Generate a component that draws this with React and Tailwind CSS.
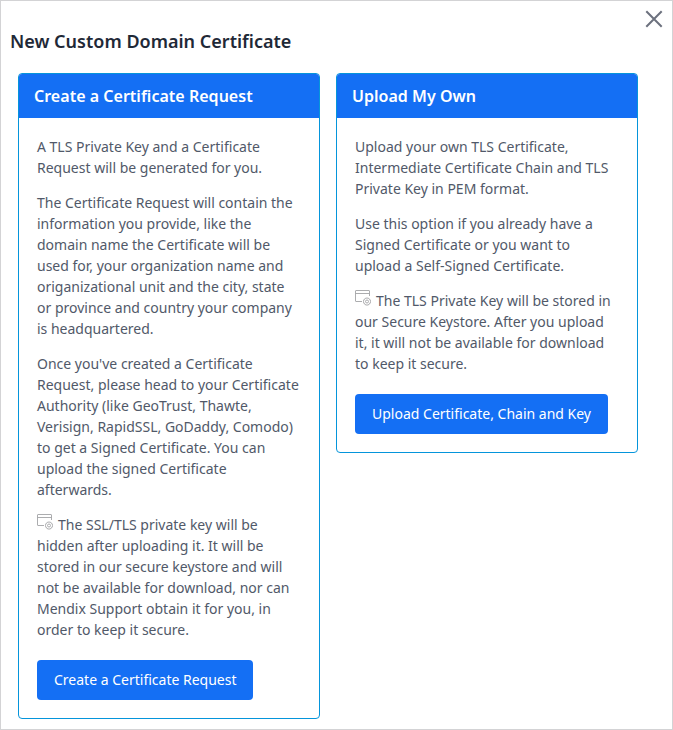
import React from "react";

function KeystoreIcon() {
  return (
    <svg
      className="mr-[5px] inline-block h-4 w-4 align-baseline"
      viewBox="0 0 16 16"
      fill="none"
      stroke="#a3a4a6"
      strokeWidth="0.9"
    >
      <path d="M7 11.5H1a.5.5 0 0 1-.5-.5V1a.5.5 0 0 1 .5-.5h13a.5.5 0 0 1 .5.5v5M.5 3.5h14" />
      <path d="M10.6 8.1h2.8l.7 1 1.1.6.3 1.8-.3 1.8-1.1.6-.7 1.1h-2.8l-.7-1.1-1.1-.6-.3-1.8.3-1.8 1.1-.6z" />
      <circle cx="12" cy="11.5" r="1.5" />
    </svg>
  );
}

function Card({ title, action, buttonWidth, children }) {
  return (
    <section className="w-[302px] overflow-hidden rounded-[4px] border border-[#0595db] bg-white">
      <h2 className="flex h-11 items-center bg-[#146ff4] px-[15px] text-base font-semibold tracking-[0.02px] text-white">
        {title}
      </h2>
      <div className="p-[18px]">
        <div className="flex flex-col gap-[14px] text-sm leading-[21px] text-[#515969]">
          {children}
        </div>
        <button
          className={`mt-5 h-10 rounded-[4px] bg-[#146ff4] pl-[17px] text-left text-sm whitespace-nowrap text-white ${buttonWidth}`}
        >
          {action}
        </button>
      </div>
    </section>
  );
}

export default function App() {
  return (
    <div className="flex h-[730px] w-[673px] flex-col border border-[#d3d3d5] bg-white font-['Noto_Sans',sans-serif]">
      <header className="flex h-[72px] justify-between pt-[9px] pr-[9px] pl-[9px]">
        <h1 className="pt-[18px] text-lg leading-[27px] font-semibold tracking-[0.01px] text-[#1f2937]">
          New Custom Domain Certificate
        </h1>
        <button aria-label="Close" className="h-[18px] w-[18px]">
          <svg className="h-[18px] w-[18px]" viewBox="0 0 18 18" stroke="#6c717e" strokeWidth="2" fill="none">
            <path d="M1.3 2.3l15.4 15.4M16.7 2.3L1.3 17.7" transform="translate(0 -1)" />
          </svg>
        </button>
      </header>
      <main className="flex items-start gap-4 pl-[17px]">
        <Card
          title="Create a Certificate Request"
          action="Create a Certificate Request"
          buttonWidth="w-[216px]"
        >
          <p>A TLS Private Key and a Certificate Request will be generated for you.</p>
          <p>
            The Certificate Request will contain the information you provide, like the domain name the
            Certificate will be used for, your organization name and origanizational unit and the city,
            state or province and country your company is headquartered.
          </p>
          <p>
            Once you've created a Certificate Request, please head to your Certificate Authority (like
            GeoTrust, Thawte, Verisign, RapidSSL, GoDaddy, Comodo) to get a Signed Certificate. You can
            upload the signed Certificate afterwards.
          </p>
          <p>
            <KeystoreIcon />
            The SSL/TLS private key will be hidden after uploading it. It will be stored in our secure
            keystore and will not be available for download, nor can Mendix Support obtain it for you,
            in order to keep it secure.
          </p>
        </Card>
        <Card title="Upload My Own" action="Upload Certificate, Chain and Key" buttonWidth="w-[253px]">
          <p>
            Upload your own TLS Certificate, Intermediate Certificate Chain and TLS Private Key in PEM
            format.
          </p>
          <p>
            Use this option if you already have a Signed Certificate or you want to upload a Self-Signed
            Certificate.
          </p>
          <p>
            <KeystoreIcon />
            The TLS Private Key will be stored in our Secure Keystore. After you upload it, it will not
            be available for download to keep it secure.
          </p>
        </Card>
      </main>
    </div>
  );
}
